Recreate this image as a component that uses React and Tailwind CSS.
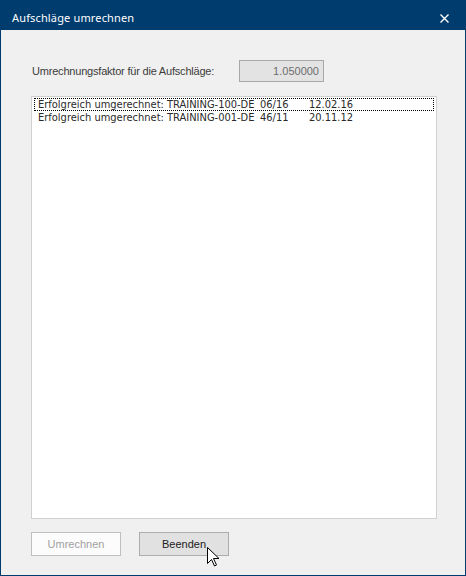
import React from "react";

const rows = [
  { text: "Erfolgreich umgerechnet: TRAINING-100-DE", period: "06/16", date: "12.02.16", focused: true },
  { text: "Erfolgreich umgerechnet: TRAINING-001-DE", period: "46/11", date: "20.11.12", focused: false },
];

const Cursor = () => (
  <svg className="absolute left-[207px] top-[547px]" width="13" height="20" viewBox="0 0 13 20">
    <path d="M0.5 0.5 L0.5 16.5 L4.5 12.5 L7.5 19 L9.5 18 L6.5 11.5 L12 11.5 Z" fill="#fff" stroke="#000" strokeWidth="1" />
  </svg>
);

const App = () => {
  return (
    <div className="relative w-[466px] h-[576px] flex flex-col bg-[#003c6e] overflow-hidden">
      {/* title bar */}
      <div className="h-[30px] flex items-center justify-between pt-[7px] pl-[12px] pr-[17px] shrink-0">
        <span className="text-white text-[11px] tracking-[0.15px] font-['Noto_Sans',sans-serif]">Aufschläge umrechnen</span>
        <svg width="9" height="9" viewBox="0 0 9 9">
          <path d="M0.5 0.5 L8.5 8.5 M8.5 0.5 L0.5 8.5" stroke="#fff" strokeWidth="1.4" />
        </svg>
      </div>

      {/* body */}
      <div className="flex-1 mx-[1px] mb-[1px] bg-[#f0f0f0] flex flex-col pl-[30px] pr-[28px] pt-[30px] pb-[19px]">
        <div className="flex items-center h-[22px]">
          <span className="w-[208px] text-[11px] text-[#3c3c3c] tracking-[-0.2px] font-['Liberation_Sans',sans-serif] pl-[1px]">
            Umrechnungsfaktor für die Aufschläge:
          </span>
          <div className="w-[85px] h-[22px] border border-[#a8a8a8] bg-[#e3e3e3] flex items-center justify-end pr-[4px] text-[11px] text-[#6d6d6d] font-['Liberation_Sans',sans-serif]">
            1.050000
          </div>
        </div>

        <div className="mt-[14px] h-[423px] border border-[#d0d0d0] bg-white p-[1px]">
          {rows.map((r) => (
            <div
              key={r.text}
              className={`h-[13px] flex items-center mx-[1px] pl-[4px] text-[11px] leading-[13px] text-[#2a2a2a] font-['DejaVu_Sans_Condensed','DejaVu_Sans',sans-serif] whitespace-pre ${r.focused ? "outline outline-1 outline-dotted outline-[#000] -outline-offset-1" : ""}`}
            >
              <span className="w-[222px]">{r.text}</span>
              <span className="w-[49px]">{r.period}</span>
              <span>{r.date}</span>
            </div>
          ))}
        </div>

        <div className="mt-[13px] flex gap-[18px]">
          <button className="w-[90px] h-[24px] border border-[#bfbfbf] bg-[#fcfcfc] text-[11px] text-[#a0a0a0] font-['Liberation_Sans',sans-serif]">
            Umrechnen
          </button>
          <button className="w-[90px] h-[24px] border border-[#adadad] bg-[#e1e1e1] text-[11px] text-[#202020] font-['Liberation_Sans',sans-serif]">
            Beenden
          </button>
        </div>
      </div>
      <Cursor />
    </div>
  );
};

export default App;
